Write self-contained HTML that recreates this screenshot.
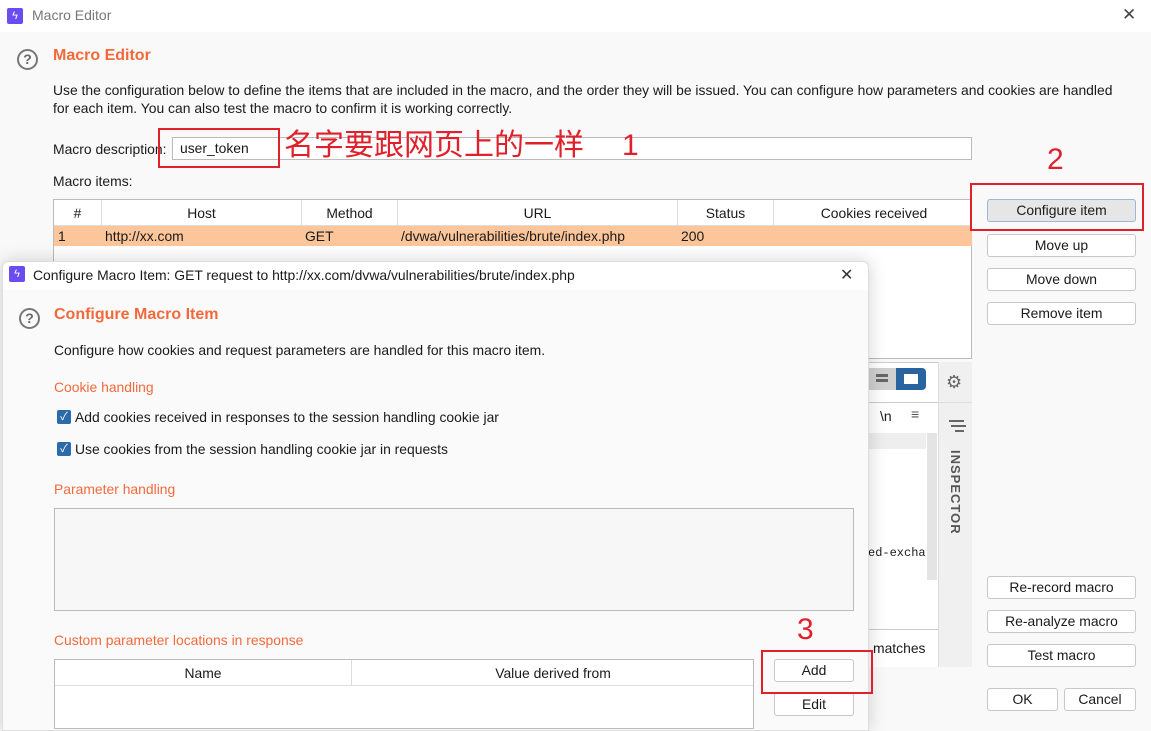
<!DOCTYPE html>
<html><head><meta charset="utf-8"><style>
*{box-sizing:border-box;margin:0;padding:0}
body{width:1151px;height:726px;overflow:hidden;background:#f9f9f9;font-family:"Liberation Sans","Noto Sans CJK SC",sans-serif;font-size:13.9px;color:#1a1a1a;position:relative}
.a{position:absolute}
.btn{position:absolute;background:#fff;border:1px solid #c8c8c8;border-radius:3px;text-align:center;font-size:13.9px;line-height:21px;height:23px}
.or{color:#f26a3c}
.red{position:absolute;border:2px solid #e0202a}
.rt{position:absolute;color:#e0202a;font-size:30px;font-family:"Liberation Sans","Noto Sans CJK SC",sans-serif}
.q{position:absolute;width:21px;height:21px;border:2px solid #777;border-radius:50%;color:#666;font-size:14px;font-weight:bold;text-align:center;line-height:17px}
.logo{position:absolute;width:16px;height:16px;background:#6a4cf0;border-radius:2px;color:#fff;font-size:11px;text-align:center;line-height:16px}
.th{position:absolute;top:0;height:25px;line-height:26px;text-align:center;border-right:1px solid #ddd}
.cb{position:absolute;width:14px;height:14px;background:#2c6aa8;border-radius:2px;color:#fff;font-size:11px;line-height:14px;text-align:center}
</style></head><body>
<div class="a" style="left:0;top:0;width:1151px;height:32px;background:#fff"></div>
<div class="logo" style="left:7px;top:8px">ϟ</div>
<div class="a" style="left:32px;top:7px;color:#777;font-size:14px">Macro Editor</div>
<div class="a" style="left:1122px;top:5px;font-size:17px;color:#444">✕</div>

<div class="q" style="left:17px;top:49px">?</div>
<div class="a or" style="left:53px;top:47px;font-size:16px;font-weight:bold">Macro Editor</div>
<div class="a" style="left:53px;top:81px;line-height:18px;width:1068px">Use the configuration below to define the items that are included in the macro, and the order they will be issued. You can configure how parameters and cookies are handled for each item. You can also test the macro to confirm it is working correctly.</div>
<div class="a" style="left:53px;top:141px">Macro description:</div>
<div class="a" style="left:172px;top:137px;width:800px;height:23px;background:#fff;border:1px solid #bbb;padding-left:7px;line-height:21px">user_token</div>
<div class="red" style="left:158px;top:128px;width:122px;height:40px"></div>
<div class="rt" style="left:284px;top:128px;line-height:36px">名字要跟网页上的一样</div>
<div class="rt" style="left:622px;top:128px;line-height:36px">1</div>
<div class="a" style="left:53px;top:173px">Macro items:</div>

<div class="a" style="left:53px;top:199px;width:919px;height:160px;background:#fff;border:1px solid #bbb">
 <div class="th" style="left:0;width:48px">#</div>
 <div class="th" style="left:48px;width:200px">Host</div>
 <div class="th" style="left:248px;width:96px">Method</div>
 <div class="th" style="left:344px;width:280px">URL</div>
 <div class="th" style="left:624px;width:96px">Status</div>
 <div class="th" style="left:720px;width:200px;border:none">Cookies received</div>
 <div class="a" style="left:0;top:25px;width:918px;height:1px;background:#ddd"></div>
 <div class="a" style="left:0;top:26px;width:918px;height:20px;background:#fcc59a;line-height:20px">
  <span class="a" style="left:4px">1</span><span class="a" style="left:51px">http://xx.com</span><span class="a" style="left:251px">GET</span><span class="a" style="left:347px">/dvwa/vulnerabilities/brute/index.php</span><span class="a" style="left:627px">200</span>
 </div>
</div>

<div class="rt" style="left:1047px;top:142px;line-height:36px">2</div>
<div class="red" style="left:970px;top:183px;width:174px;height:48px"></div>
<div class="btn" style="left:987px;top:199px;width:149px;background:#e6e6e6;border-color:#9ab8d8">Configure item</div>
<div class="btn" style="left:987px;top:234px;width:149px">Move up</div>
<div class="btn" style="left:987px;top:268px;width:149px">Move down</div>
<div class="btn" style="left:987px;top:302px;width:149px">Remove item</div>
<div class="btn" style="left:987px;top:576px;width:149px">Re-record macro</div>
<div class="btn" style="left:987px;top:610px;width:149px">Re-analyze macro</div>
<div class="btn" style="left:987px;top:644px;width:149px">Test macro</div>
<div class="btn" style="left:987px;top:688px;width:71px">OK</div>
<div class="btn" style="left:1064px;top:688px;width:72px">Cancel</div>

<div class="a" style="left:868px;top:362px;width:70px;height:305px;background:#fff;border-top:1px solid #ccc"></div>
<div class="a" style="left:868px;top:368px;width:58px;height:22px;background:#d0d0d0;border-radius:0 4px 4px 0"></div>
<div class="a" style="left:896px;top:368px;width:30px;height:22px;background:#2a64a0;border-radius:0 4px 4px 0"></div>
<div class="a" style="left:904px;top:374px;width:14px;height:10px;background:#fff"></div>
<div class="a" style="left:876px;top:374px;width:12px;height:3px;background:#666;box-shadow:0 5px 0 #666"></div>
<div class="a" style="left:868px;top:402px;width:70px;height:1px;background:#ccc"></div>
<div class="a" style="left:880px;top:408px;font-size:14px">\n</div>
<div class="a" style="left:911px;top:406px;font-size:14px;color:#555">≡</div>
<div class="a" style="left:868px;top:433px;width:58px;height:16px;background:#eee"></div>
<div class="a" style="left:927px;top:433px;width:10px;height:147px;background:#e4e4e4"></div>
<div class="a" style="left:868px;top:546px;font-family:'Liberation Mono',monospace;font-size:12px">ed-excha</div>
<div class="a" style="left:868px;top:629px;width:70px;height:1px;background:#ccc"></div>
<div class="a" style="left:873px;top:640px">matches</div>
<div class="a" style="left:938px;top:362px;width:34px;height:305px;background:#f0f0f0;border-left:1px solid #ddd"></div>
<div class="a" style="left:946px;top:372px;font-size:18px;color:#666">⚙</div>
<div class="a" style="left:938px;top:402px;width:34px;height:1px;background:#ddd"></div>
<div class="a" style="left:949px;top:420px;width:15px;height:2px;background:#666;box-shadow:2px 5px 0 -0px #666"></div>
<div class="a" style="left:955px;top:430px;width:9px;height:2px;background:#666"></div>
<div class="a" style="left:963px;top:450px;transform:rotate(90deg);transform-origin:0 0;font-weight:bold;font-size:13px;color:#555;letter-spacing:1px">INSPECTOR</div>

<div class="a" style="left:2px;top:261px;width:867px;height:470px;background:#fafafa;border:1px solid #ddd;border-radius:6px 6px 0 0;box-shadow:0 0 18px rgba(0,0,0,0.18)"></div>
<div class="a" style="left:3px;top:262px;width:865px;height:28px;background:#fff;border-radius:6px 6px 0 0"></div>
<div class="logo" style="left:9px;top:266px">ϟ</div>
<div class="a" style="left:33px;top:267px">Configure Macro Item: GET request to http://xx.com/dvwa/vulnerabilities/brute/index.php</div>
<div class="a" style="left:840px;top:265px;font-size:16px;color:#333">✕</div>
<div class="q" style="left:19px;top:308px">?</div>
<div class="a or" style="left:54px;top:306px;font-size:16px;font-weight:bold">Configure Macro Item</div>
<div class="a" style="left:54px;top:342px">Configure how cookies and request parameters are handled for this macro item.</div>
<div class="a or" style="left:54px;top:379px">Cookie handling</div>
<div class="cb" style="left:57px;top:410px">✓</div>
<div class="a" style="left:75px;top:409px">Add cookies received in responses to the session handling cookie jar</div>
<div class="cb" style="left:57px;top:442px">✓</div>
<div class="a" style="left:75px;top:441px">Use cookies from the session handling cookie jar in requests</div>
<div class="a or" style="left:54px;top:481px">Parameter handling</div>
<div class="a" style="left:54px;top:508px;width:800px;height:103px;background:#f7f7f7;border:1px solid #bbb"></div>
<div class="a or" style="left:54px;top:632px">Custom parameter locations in response</div>
<div class="a" style="left:54px;top:659px;width:700px;height:70px;background:#fff;border:1px solid #bbb">
 <div class="th" style="left:0;width:297px">Name</div>
 <div class="th" style="left:297px;width:402px;border:none">Value derived from</div>
 <div class="a" style="left:0;top:25px;width:698px;height:1px;background:#ddd"></div>
</div>
<div class="btn" style="left:774px;top:659px;width:80px">Add</div>
<div class="btn" style="left:774px;top:693px;width:80px">Edit</div>
<div class="red" style="left:761px;top:650px;width:112px;height:44px"></div>
<div class="rt" style="left:797px;top:612px;line-height:36px">3</div>
</body></html>
